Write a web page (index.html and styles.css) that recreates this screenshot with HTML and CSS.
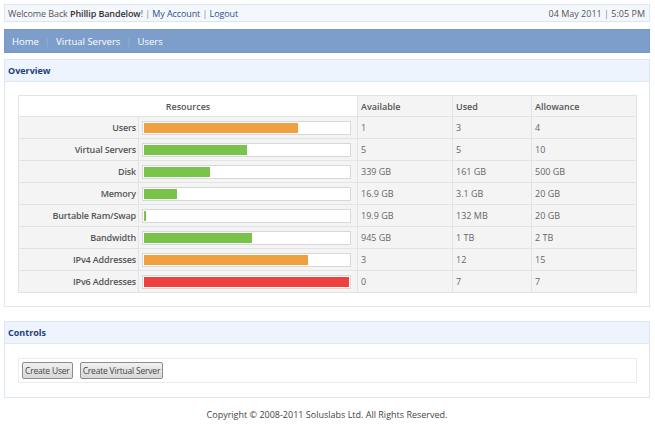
FILE: index.html
```html
<!DOCTYPE html>
<html>
<head>
<meta charset="utf-8">
<link rel="stylesheet" href="styles.css">
</head>
<body>
<div class="topbar">
  <div class="welcome">Welcome Back <b>Phillip Bandelow</b>! <span class="sep">|</span> <a>My Account</a> <span class="sep">|</span> <a>Logout</a></div>
  <div class="date">04 May 2011 <span class="sep">|</span> 5:05 PM</div>
</div>
<div class="nav">
  <a>Home</a><span class="navsep">|</span><a>Virtual Servers</a><span class="navsep">|</span><a>Users</a>
</div>
<div class="panel overview">
  <div class="panel-head">Overview</div>
  <div class="panel-body">
    <table class="res">
      <colgroup>
        <col class="col-lbl">
        <col class="col-bar">
        <col class="col-av">
        <col class="col-used">
        <col class="col-all">
      </colgroup>
      <tr class="head">
        <th colspan="2" class="resources">Resources</th>
        <th>Available</th>
        <th>Used</th>
        <th>Allowance</th>
      </tr>
      <tr><td class="lbl">Users</td><td class="barcell"><div class="bar"><div class="fill orange" style="width:75%"></div></div></td><td>1</td><td>3</td><td>4</td></tr>
      <tr><td class="lbl">Virtual Servers</td><td class="barcell"><div class="bar"><div class="fill green" style="width:50%"></div></div></td><td>5</td><td>5</td><td>10</td></tr>
      <tr><td class="lbl">Disk</td><td class="barcell"><div class="bar"><div class="fill green" style="width:32%"></div></div></td><td>339 GB</td><td>161 GB</td><td>500 GB</td></tr>
      <tr><td class="lbl">Memory</td><td class="barcell"><div class="bar"><div class="fill green" style="width:16%"></div></div></td><td>16.9 GB</td><td>3.1 GB</td><td>20 GB</td></tr>
      <tr><td class="lbl">Burtable Ram/Swap</td><td class="barcell"><div class="bar"><div class="fill green" style="width:1%"></div></div></td><td>19.9 GB</td><td>132 MB</td><td>20 GB</td></tr>
      <tr><td class="lbl">Bandwidth</td><td class="barcell"><div class="bar"><div class="fill green" style="width:52.5%"></div></div></td><td>945 GB</td><td>1 TB</td><td>2 TB</td></tr>
      <tr><td class="lbl">IPv4 Addresses</td><td class="barcell"><div class="bar"><div class="fill orange" style="width:80%"></div></div></td><td>3</td><td>12</td><td>15</td></tr>
      <tr><td class="lbl">IPv6 Addresses</td><td class="barcell"><div class="bar"><div class="fill red" style="width:100%"></div></div></td><td>0</td><td>7</td><td>7</td></tr>
    </table>
  </div>
</div>
<div class="panel controls">
  <div class="panel-head">Controls</div>
  <div class="panel-body">
    <div class="btnbox">
      <button class="btn">Create User</button>
      <button class="btn">Create Virtual Server</button>
    </div>
  </div>
</div>
<div class="footer">Copyright © 2008-2011 Soluslabs Ltd. All Rights Reserved.</div>
</body>
</html>
```
FILE: styles.css
```css
html, body {
  margin: 0;
  padding: 0;
  background: #ffffff;
}
body {
  padding: 4px 5px 0 4px;
  font-family: "Open Sans", "DejaVu Sans", sans-serif;
  font-size: 9px;
  color: #555555;
}
a {
  color: #2f4f8a;
  text-decoration: none;
}
.sep {
  color: #8a8a8a;
}
.topbar {
  height: 16px;
  border: 1px solid #dce6f2;
  background: #f4f8fd;
  display: flex;
  justify-content: space-between;
  align-items: center;
  padding: 0 4px 0 3px;
}
.welcome {
  letter-spacing: -0.1px;
}
.welcome b {
  color: #333333;
  font-weight: 600;
}
.date {
  color: #555555;
}
.nav {
  margin-top: 7px;
  height: 24px;
  background: #7d9ecb;
  border: 1px solid #7897c7;
  box-sizing: border-box;
  display: flex;
  align-items: center;
  padding-left: 7px;
  font-size: 9.5px;
}
.nav a {
  color: #ffffff;
}
.navsep {
  color: #9cb5d8;
  margin: 0 6px;
}
.panel {
  margin-top: 6px;
  border: 1px solid #dde7f3;
}
.panel-head {
  height: 21px;
  background: #eef4fd;
  border-bottom: 1px solid #dde7f3;
  display: flex;
  align-items: center;
  padding-left: 3px;
  font-weight: 700;
  color: #1f3f7c;
  font-size: 9px;
}
.overview .panel-body {
  padding: 13px 12px 13px 13px;
}
.res {
  width: 100%;
  border-collapse: collapse;
  border: 1px solid #e6e6e6;
  table-layout: fixed;
}
.col-lbl { width: 120px; }
.col-bar { width: 219px; }
.col-av { width: 95px; }
.col-used { width: 79px; }
.res th, .res td {
  background: #f4f4f4;
  border: 1px solid #e3e3e3;
  height: 21px;
  padding: 0 3px;
  text-align: left;
  color: #666666;
}
.res th {
  height: 20px;
  font-weight: 600;
  color: #555555;
}
.res th.resources {
  background: #ffffff;
  text-align: center;
}
.res td.lbl {
  text-align: right;
  font-weight: 600;
  color: #555555;
  padding-right: 2px;
  letter-spacing: -0.15px;
}
.res td.barcell {
  padding: 0 6px 0 3px;
}
.bar {
  height: 10px;
  border: 1px solid #d8d8d8;
  background: #ffffff;
  padding: 1px;
}
.fill {
  height: 10px;
}
.orange { background: #f0a03f; }
.green { background: #79c34a; }
.red { background: #ef3f3f; }
.controls {
  margin-top: 14px;
}
.controls .panel-body {
  padding: 14px 12px 14px 13px;
}
.btnbox {
  border: 1px solid #ebebeb;
  background: #ffffff;
  padding: 3px 3px;
  display: flex;
  gap: 7px;
}
.btn {
  font-family: "Open Sans", "DejaVu Sans", sans-serif;
  font-size: 8.5px;
  letter-spacing: -0.2px;
  color: #444444;
  height: 17px;
  padding: 0 2px;
  border: 1px solid #8c8c8c;
  border-radius: 2px;
  background: linear-gradient(#f0f0f0, #d8d8d8);
}
.footer {
  text-align: center;
  margin-top: 10px;
  color: #444444;
}
```
